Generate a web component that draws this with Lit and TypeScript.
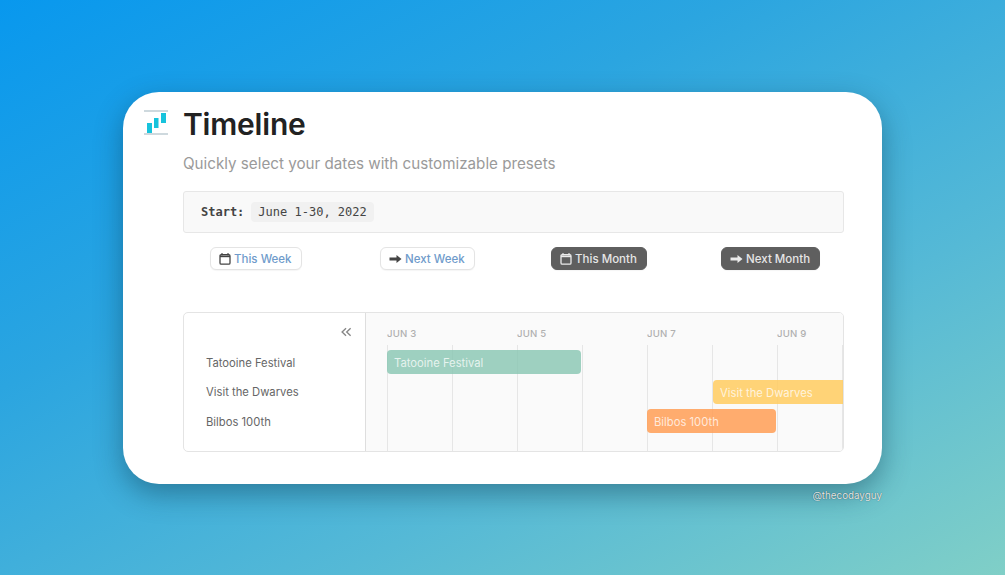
import { LitElement, html, css } from 'lit';
import { customElement } from 'lit/decorators.js';

const calendarIcon = html`<svg class="ico" viewBox="0 0 12 12" width="12" height="12">
  <path d="M3 .3v2M9 .3v2" stroke="currentColor" stroke-width="1.500" fill="none"/>
  <rect x="1" y="1.700" width="10" height="9.500" rx="1.200" stroke="currentColor" stroke-width="1.300" fill="none"/>
  <path d="M1 2.500h10v1.700H1z" fill="currentColor"/>
</svg>`;

const arrowIcon = html`<svg class="ico arrow" viewBox="0 0 13 12" width="13" height="12">
  <path d="M.5 4.500h7V2l5 4-5 4V7.500h-7z" fill="currentColor"/>
</svg>`;

const presets = [
  { label: 'This Week', icon: calendarIcon, dark: false },
  { label: 'Next Week', icon: arrowIcon, dark: false },
  { label: 'This Month', icon: calendarIcon, dark: true },
  { label: 'Next Month', icon: arrowIcon, dark: true },
];

const rows = ['Tatooine Festival', 'Visit the Dwarves', 'Bilbos 100th'];

const bars = [
  { label: 'Tatooine Festival', cls: 'green' },
  { label: 'Visit the Dwarves', cls: 'yellow' },
  { label: 'Bilbos 100th', cls: 'orange' },
];

/**
 * Timeline preset card on a gradient backdrop
 */
@customElement('app-root')
export class AppRoot extends LitElement {

    static styles = css`
        :host {
            display: block;
            width: 1005px;
            height: 575px;
            overflow: hidden;
            box-sizing: border-box;
            padding: 92px 123px 0;
            background: linear-gradient(152deg, #0898ee 0%, #2ba5e0 35%, #55b9d6 68%, #80cfc7 100%);
            font-family: Inter, "Liberation Sans", sans-serif;
        }
        .card {
            box-sizing: border-box;
            width: 759px;
            height: 392px;
            background: #fff;
            border-radius: 36px;
            box-shadow: 0 10px 28px rgba(10, 50, 70, 0.42);
            padding: 14px 38px 0 20px;
            display: grid;
            grid-template-columns: 40px 661px;
        }
        .logo {
            margin-top: 4px;
        }
        h1 {
            margin: 0;
            font-size: 30px;
            line-height: 36px;
            font-weight: 600;
            color: #222;
            letter-spacing: -0.2px;
        }
        .sub {
            margin: 12px 0 0;
            font-size: 15.2px;
            line-height: 20px;
            color: #9a9a9a;
        }
        .callout {
            box-sizing: border-box;
            margin-top: 17px;
            height: 42px;
            background: #f9f9f9;
            border: 1px solid #e7e7e7;
            border-radius: 3px;
            display: flex;
            align-items: center;
            padding-left: 17px;
            gap: 7px;
            font-family: "DejaVu Sans Mono", "Liberation Mono", monospace;
            font-size: 12px;
            color: #444;
        }
        .callout b {
            font-weight: 700;
        }
        .callout code {
            font: inherit;
            background: #f1f1f1;
            border-radius: 4px;
            padding: 3px 7px;
        }
        .presets {
            display: grid;
            grid-template-columns: repeat(4, 171.6px);
            margin: 14px 0 0 -13px;
            justify-items: center;
        }
        .btn {
            box-sizing: border-box;
            height: 23px;
            display: flex;
            align-items: center;
            gap: 3px;
            padding: 0 9px 0 8px;
            border-radius: 6px;
            font-size: 11.5px;
            font-weight: 500;
            color: #6f9bcb;
            background: #fff;
            border: 1px solid #e4e4e4;
            box-shadow: 0 1px 1px rgba(0, 0, 0, 0.04);
        }
        .btn .ico {
            color: #444;
        }
        .btn.dark {
            background: #5f5f5f;
            border-color: #5f5f5f;
            color: #e6e6e6;
        }
        .btn.dark .ico {
            color: #ececec;
        }
        .gantt {
            box-sizing: border-box;
            margin-top: 42px;
            height: 140px;
            border: 1px solid #e4e4e4;
            border-radius: 5px;
            display: grid;
            grid-template-columns: 182px 1fr;
            overflow: hidden;
        }
        .side {
            border-right: 1px solid #dedede;
            display: flex;
            flex-direction: column;
        }
        .collapse {
            height: 35px;
            display: flex;
            justify-content: flex-end;
            align-items: center;
            padding: 3px 13px 0 0;
            color: #888;
            box-sizing: border-box;
        }
        .row {
            height: 29.5px;
            display: flex;
            align-items: center;
            padding-left: 22px;
            font-size: 11.25px;
            color: #666;
        }
        .chart {
            background: #fafafa;
            display: grid;
            grid-template-columns: 21px repeat(7, 65px) 1fr;
            grid-template-rows: 32px 5px 24px 6px 24px 5px 24px 1fr;
        }
        .day {
            grid-row: 1;
            font-size: 9.6px;
            font-weight: 500;
            color: #b0b0b0;
            letter-spacing: 0.2px;
            white-space: nowrap;
            padding-top: 14px;
            line-height: 13px;
        }
        .line {
            grid-row: 2 / -1;
            border-left: 1px solid #e6e6e6;
        }
        .bar {
            z-index: 1;
            display: flex;
            align-items: center;
            padding: 1px 0 0 7px;
            font-size: 11.25px;
            white-space: nowrap;
            overflow: hidden;
            color: rgba(255, 255, 255, 0.75);
            border-radius: 4px;
        }
        .green {
            grid-row: 3;
            grid-column: 2 / 5;
            background: rgba(135, 198, 178, 0.8);
            margin-right: 1px;
        }
        .yellow {
            grid-row: 5;
            grid-column: 7 / -1;
            background: rgba(255, 205, 100, 0.88);
            border-radius: 4px 0 0 4px;
            margin-left: 1px;
        }
        .orange {
            grid-row: 7;
            grid-column: 6 / 8;
            background: rgba(255, 160, 90, 0.88);
            margin-right: 1px;
        }
        .credit {
            margin-top: 5px;
            width: 759px;
            text-align: right;
            font-size: 9.8px;
            line-height: 13px;
            color: rgba(255, 255, 255, 0.88);
            text-shadow: 0 0 1px rgba(0, 0, 0, 0.7);
        }
    `;

    render() {
        return html`
            <div class="card">
                <svg class="logo" viewBox="0 0 26 26" width="26" height="26">
                    <path d="M1 1h24M1 24h24" stroke="#9db4bd" stroke-width="1.200"/>
                    <rect x="4" y="13" width="5" height="10" fill="#17c3dc"/>
                    <rect x="11" y="8" width="4.500" height="10" fill="#17c3dc"/>
                    <rect x="18" y="3" width="5" height="10" fill="#17c3dc"/>
                </svg>
                <div>
                    <h1>Timeline</h1>
                    <p class="sub">Quickly select your dates with customizable presets</p>
                    <div class="callout"><b>Start:</b><code>June 1-30, 2022</code></div>
                    <div class="presets">
                        ${presets.map(p => html`
                            <div class="btn ${p.dark ? 'dark' : ''}">${p.icon}<span>${p.label}</span></div>
                        `)}
                    </div>
                    <div class="gantt">
                        <div class="side">
                            <div class="collapse">
                                <svg viewBox="0 0 12 10" width="11" height="10">
                                    <path d="M5.500 .8 1.200 5l4.300 4.200M10.500 .8 6.200 5l4.300 4.200" stroke="currentColor" stroke-width="1.500" fill="none"/>
                                </svg>
                            </div>
                            ${rows.map(r => html`<div class="row">${r}</div>`)}
                        </div>
                        <div class="chart">
                            ${[2, 4, 6, 8].map((c, i) => html`
                                <div class="day" style="grid-column: ${c}">JUN ${3 + i * 2}</div>
                            `)}
                            ${[2, 3, 4, 5, 6, 7, 8, 9].map(c => html`
                                <div class="line" style="grid-column: ${c}"></div>
                            `)}
                            ${bars.map(b => html`<div class="bar ${b.cls}">${b.label}</div>`)}
                        </div>
                    </div>
                </div>
            </div>
            <div class="credit">@thecodayguy</div>
        `;
    }
}
